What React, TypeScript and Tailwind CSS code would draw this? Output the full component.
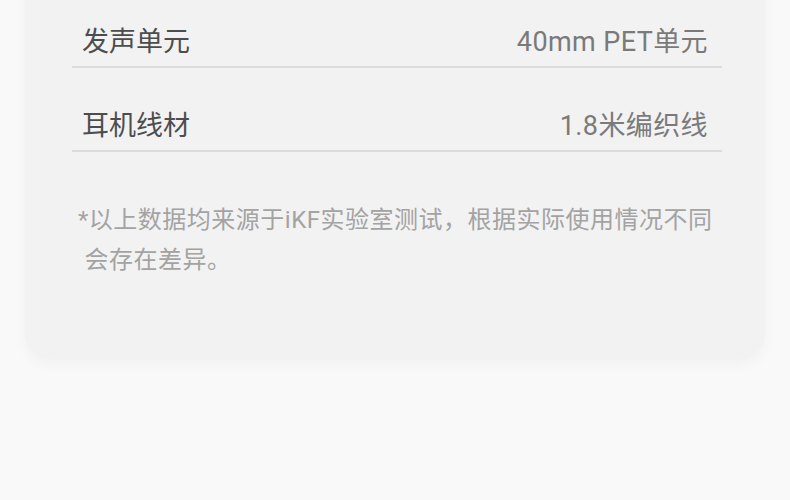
const specs = [
	{ label: '发声单元', value: '40mm PET单元' },
	{ label: '耳机线材', value: '1.8米编织线' },
];

const font = { fontFamily: 'Roboto, "Noto Sans CJK SC", sans-serif' };

const SpecRow = ({ label, value }: { label: string; value: string }) => (
	<li className="flex h-[84px] items-end justify-between border-b-2 border-[#dcdcdc] pb-[8px] pl-[10px] pr-[14px]">
		<span className="text-[27px] leading-[32px] text-[#4d4d4d]">{label}</span>
		<span className="text-[27px] leading-[32px] tracking-[0.4px] text-[#7a7a7a]">{value}</span>
	</li>
);

const App = () => {
	return (
		<div className="h-[500px] overflow-hidden bg-[#f9f9f9]" style={font}>
			<div className="mx-[25px] -mt-[16px] rounded-b-[24px] bg-[#f2f2f2] pb-[78px] shadow-[0_6px_14px_rgba(0,0,0,0.035)]">
				<ul className="ml-[47px] mr-[43px]">
					{specs.map((s) => (
						<SpecRow key={s.label} label={s.label} value={s.value} />
					))}
				</ul>

				<p className="mt-[48px] pl-[53px] text-[24px] leading-[40px] tracking-[0.5px] text-[#a3a3a3]">
					<span className="block whitespace-nowrap">*以上数据均来源于iKF实验室测试，根据实际使用情况不同</span>
					<span className="block whitespace-nowrap">&nbsp;会存在差异。</span>
				</p>
			</div>
		</div>
	);
};

export default App;
